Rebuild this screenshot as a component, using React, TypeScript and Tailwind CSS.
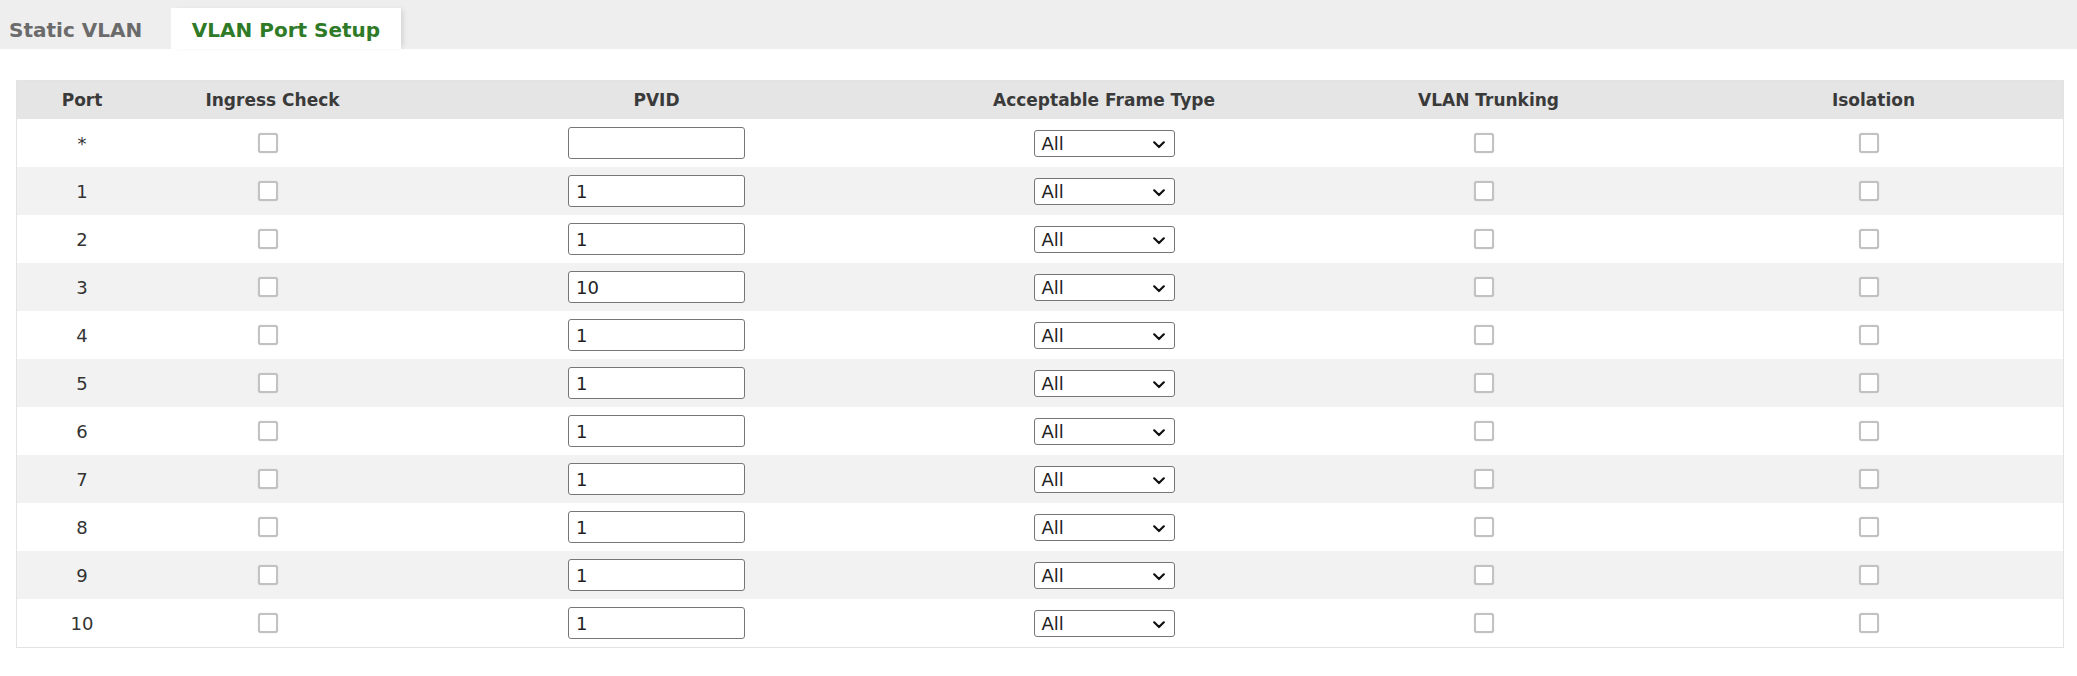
import React from "react";

const rows = [
  { port: "*", pvid: "" },
  { port: "1", pvid: "1" },
  { port: "2", pvid: "1" },
  { port: "3", pvid: "10" },
  { port: "4", pvid: "1" },
  { port: "5", pvid: "1" },
  { port: "6", pvid: "1" },
  { port: "7", pvid: "1" },
  { port: "8", pvid: "1" },
  { port: "9", pvid: "1" },
  { port: "10", pvid: "1" },
];

const cols = "grid grid-cols-[130px_251px_517px_378px_391px_1fr]";

function Box() {
  return (
    <span className="mr-[10px] block w-[20px] h-[20px] rounded-[3px] border-2 border-[#c2c2c2] bg-white shadow-[0_0_1px_#b8b8b8]" />
  );
}

function Select() {
  return (
    <div className="relative w-[141px] h-[27px] rounded-[3px] border border-[#767676] bg-white flex items-center pl-[7px] pt-[1px] text-[18px] text-[#222]">
      All
      <svg
        className="absolute right-[9px] top-[10px]"
        width="12"
        height="8"
        viewBox="0 0 12 8"
        fill="none"
      >
        <path d="M1.2 1.3 L6 6 L10.8 1.3" stroke="#111" strokeWidth="2.2" strokeLinecap="round" strokeLinejoin="round" />
      </svg>
    </div>
  );
}

export default function App() {
  return (
    <div
      className="w-[2077px] h-[676px] bg-white text-[#333]"
      style={{ fontFamily: '"DejaVu Sans", sans-serif' }}
    >
      <div className="h-[49px] bg-[#eeeeee] flex items-end">
        <div className="w-[171px] h-[41px] pl-[9px] pt-[2px] flex items-center text-[20px] font-bold text-[#6b6b6b]">
          Static VLAN
        </div>
        <div className="w-[230px] h-[41px] pt-[2px] bg-white flex items-center justify-center text-[20px] font-bold text-[#2e7a27] shadow-[4px_0_5px_-2px_rgba(0,0,0,0.12)]">
          VLAN Port Setup
        </div>
      </div>

      <div className="mt-[31px] ml-[16px] w-[2048px] border border-[#e3e3e3]">
        <div className={`${cols} h-[38px] pt-[2px] bg-[#e5e5e5] items-center text-[17px] font-bold text-[#3a3a3a]`}>
          <div className="text-center">Port</div>
          <div className="text-center">Ingress Check</div>
          <div className="text-center">PVID</div>
          <div className="text-center">Acceptable Frame Type</div>
          <div className="text-center">VLAN Trunking</div>
          <div className="text-center">Isolation</div>
        </div>
        {rows.map((r, i) => (
          <div
            key={r.port}
            className={`${cols} h-[48px] items-center text-[18px] text-[#333] ${
              i % 2 === 1 ? "bg-[#f2f2f2]" : "bg-white"
            }`}
          >
            <div className="text-center">{r.port}</div>
            <div className="flex justify-center">
              <Box />
            </div>
            <div className="flex justify-center">
              <div className="w-[177px] h-[32px] rounded-[3px] border border-[#767676] bg-white flex items-center pl-[7px] text-[18px] text-[#222]">
                {r.pvid}
              </div>
            </div>
            <div className="flex justify-center">
              <Select />
            </div>
            <div className="flex justify-center">
              <Box />
            </div>
            <div className="flex justify-center">
              <Box />
            </div>
          </div>
        ))}
      </div>
    </div>
  );
}
